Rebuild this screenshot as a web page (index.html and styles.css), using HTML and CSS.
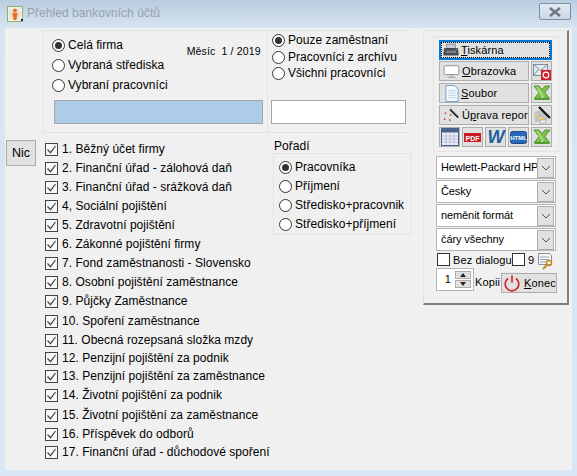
FILE: index.html
```
<!DOCTYPE html>
<html lang="cs">
<head>
<meta charset="utf-8">
<title>Přehled bankovních účtů</title>
<link rel="stylesheet" href="styles.css">
</head>
<body>
<svg class="defs" width="0" height="0">
  <symbol id="chk" viewBox="0 0 13 13"><rect x=".5" y=".5" width="12" height="12" fill="#f8f8f8" stroke="#444"/><path d="M2.5 6.500l3 3.200 5-6.700" fill="none" stroke="#444" stroke-width="1.200"/></symbol>
  <symbol id="xls" viewBox="0 0 18 16"><path d="M1 1h5l3 3.500L12 1h5l-5 6.500 5 6.500h-5l-3-3.500L6 14H1l5-6.500z" fill="#7cc04a" stroke="#3f8a22" stroke-width=".8"/><path d="M2 13h14v2H2z" fill="#4f9d2c"/><path d="M3 2h2.500l6 10H9z" fill="#a5dc78"/></symbol>
</svg>
<div class="window">
  <header class="titlebar">
    <svg class="appicon" width="16" height="16" viewBox="0 0 16 16"><rect x=".5" y=".5" width="15" height="15" fill="#f1eee4" stroke="#8db36a"/><circle cx="8" cy="8" r="6" fill="#e9dfd3"/><circle cx="8" cy="4.600" r="1.900" fill="#e2701e"/><path d="M5.200 7h5.600l-1 4-.5 3H6.700l-.5-3z" fill="#e2701e"/><rect x="14" y="13" width="2" height="2" fill="#222"/></svg>
    <span class="titletext">Přehled bankovních účtů</span>
    <button class="close"><svg width="14" height="10" viewBox="0 0 14 10"><path d="M2 1l10 8M12 1L2 9" stroke="#6d7580" stroke-width="2.400"/></svg></button>
  </header>
  <div class="client">
    <div class="main">
      <section class="top">
        <div class="top-left">
          <div class="top-left-row">
            <div class="radios r20">
              <label class="radio"><i class="dot on"></i>Celá firma</label>
              <label class="radio"><i class="dot"></i>Vybraná střediska</label>
              <label class="radio"><i class="dot"></i>Vybraní pracovníci</label>
            </div>
            <span class="month">Měsíc &nbsp;1 / 2019</span>
          </div>
          <div class="field blue"></div>
        </div>
        <div class="top-right">
          <div class="radios r165">
            <label class="radio"><i class="dot on"></i>Pouze zaměstnaní</label>
            <label class="radio"><i class="dot"></i>Pracovníci z archívu</label>
            <label class="radio"><i class="dot"></i>Všichni pracovníci</label>
          </div>
          <div class="field white"></div>
        </div>
      </section>
      <section class="middle">
        <button class="btn nic">Nic</button>
        <ul class="checks">
          <li><svg class="cb"><use href="#chk"/></svg>1. Běžný účet firmy</li>
          <li><svg class="cb"><use href="#chk"/></svg>2. Finanční úřad - zálohová daň</li>
          <li><svg class="cb"><use href="#chk"/></svg>3. Finanční úřad - srážková daň</li>
          <li><svg class="cb"><use href="#chk"/></svg>4, Sociální pojištění</li>
          <li><svg class="cb"><use href="#chk"/></svg>5. Zdravotní pojištění</li>
          <li><svg class="cb"><use href="#chk"/></svg>6. Zákonné pojištění firmy</li>
          <li><svg class="cb"><use href="#chk"/></svg>7. Fond zaměstnanosti - Slovensko</li>
          <li><svg class="cb"><use href="#chk"/></svg>8. Osobní pojištění zaměstnance</li>
          <li><svg class="cb"><use href="#chk"/></svg>9. Půjčky Zaměstnance</li>
          <li class="tall"><svg class="cb"><use href="#chk"/></svg>10. Spoření zaměstnance</li>
          <li><svg class="cb"><use href="#chk"/></svg>11. Obecná rozepsaná složka mzdy</li>
          <li class="short"><svg class="cb"><use href="#chk"/></svg>12. Penzijní pojištění za podnik</li>
          <li class="short"><svg class="cb"><use href="#chk"/></svg>13. Penzijní pojištění za zaměstnance</li>
          <li><svg class="cb"><use href="#chk"/></svg>14. Životní pojištění za podnik</li>
          <li class="tall"><svg class="cb"><use href="#chk"/></svg>15. Životní pojištění za zaměstnance</li>
          <li><svg class="cb"><use href="#chk"/></svg>16. Příspěvek do odborů</li>
          <li class="short"><svg class="cb"><use href="#chk"/></svg>17. Finanční úřad - důchodové spoření</li>
        </ul>
        <div class="order">
          <div class="order-title">Pořadí</div>
          <div class="order-box">
            <label class="radio"><i class="dot on"></i>Pracovníka</label>
            <label class="radio"><i class="dot"></i>Příjmení</label>
            <label class="radio"><i class="dot"></i>Středisko+pracovnik</label>
            <label class="radio"><i class="dot"></i>Středisko+příjmení</label>
          </div>
        </div>
      </section>
    </div>
    <aside class="side">
      <div class="outputs">
        <button class="btn wide focus"><span class="focus-in"><svg class="ic prn" width="16" height="14" viewBox="0 0 22 18"><path d="M5 1h12v6H5z" fill="#c9ccd0" stroke="#777"/><path d="M2 7h18l1 9H1z" fill="#4a4f55" stroke="#33373c"/><path d="M4 10h14v3H4z" fill="#7c838a"/><rect x="17" y="8" width="2" height="1" fill="#5cd65c"/></svg><span class="lbl"><u>T</u>iskárna</span></span></button>
        <div class="out-row">
          <button class="btn grow"><svg class="ic mon" width="17" height="15" viewBox="0 0 22 18"><rect x="1.500" y="1.500" width="19" height="11.500" rx="1.500" fill="#fff" stroke="#777"/><path d="M11 13v3M6 16.500h10" stroke="#888"/></svg><span class="lbl"><u>O</u>brazovka</span></button>
          <button class="btn sq"><svg width="18" height="17" viewBox="0 0 18 17"><rect x=".5" y="1.500" width="14" height="11" fill="#dfeaf3" stroke="#7d8c98"/><path d="M.5 1.500l7 6 7-6M.5 12.500l5-6M14.500 12.500l-5-6" fill="none" stroke="#7d8c98"/><rect x="8" y="7" width="10" height="10" fill="#d0202a"/><circle cx="13" cy="12" r="2.800" fill="none" stroke="#fff" stroke-width="1.200"/></svg></button>
        </div>
        <div class="out-row">
          <button class="btn grow"><svg class="ic doc" width="14" height="18" viewBox="0 0 14 18"><path d="M.5.500h9l4 4v13H.5z" fill="#f3f8fd" stroke="#6f9fc8"/><path d="M3 6h8M3 8.500h8M3 11h8M3 13.500h8" stroke="#b8cfe4"/></svg><span class="lbl"><u>S</u>oubor</span></button>
          <button class="btn sq"><svg width="18" height="16"><use href="#xls"/></svg></button>
        </div>
        <div class="out-row">
          <button class="btn grow"><svg class="ic wand" width="17" height="16" viewBox="0 0 20 18"><path d="M8 2l10 10" stroke="#222" stroke-width="2.200"/><path d="M6 1l2 2" stroke="#ddd" stroke-width="2"/><path d="M2 7h2M3 6v2M8 9h2M9 8v2M1 14h2M2 13v2M7 15h2M8 14v2" stroke="#c33"/></svg><span class="lbl">Ú<u>p</u>rava report</span></button>
          <button class="btn sq"><svg width="18" height="18" viewBox="0 0 18 18"><path d="M1 6l9-2 5 9-6 3H2z" fill="#bfc2c6"/><path d="M2 8h3v2H2zM6 11h4v3H6z" fill="#f3d24f"/><path d="M7 14h6v3H7z" fill="#f4f4f4" stroke="#999" stroke-width=".6"/><path d="M6 1l11 11" stroke="#111" stroke-width="2.200"/></svg></button>
        </div>
        <div class="out-row">
          <button class="btn sq"><svg width="18" height="18" viewBox="0 0 18 18"><rect x=".5" y=".5" width="17" height="17" fill="#eef0f8" stroke="#47608c"/><rect x="1" y="1" width="16" height="3.500" fill="#47608c"/><path d="M1 8h16M1 11h16M1 14h16M5 5v12M9 5v12M13 5v12" stroke="#b3bed4"/></svg></button>
          <button class="btn sq"><svg width="17" height="9" viewBox="0 0 17 9"><rect width="17" height="9" fill="#cc1a22"/><text x="8.500" y="7.500" class="pdf">PDF</text></svg></button>
          <button class="btn sq"><span class="word">W</span></button>
          <button class="btn sq"><svg width="17" height="13" viewBox="0 0 17 13"><rect x=".5" y=".5" width="16" height="12" rx="2" fill="#2a68b8" stroke="#1d4a8c"/><text x="8.500" y="9" class="html">HTML</text></svg></button>
          <button class="btn sq"><svg width="18" height="16"><use href="#xls"/></svg></button>
        </div>
      </div>
      <div class="selects">
        <div class="select"><span class="sel-text">Hewlett-Packard HP</span><span class="arrow"><svg width="10" height="6" viewBox="0 0 10 6"><path d="M1 1l4 4 4-4" fill="none" stroke="#555"/></svg></span></div>
        <div class="select"><span class="sel-text">Česky</span><span class="arrow"><svg width="10" height="6" viewBox="0 0 10 6"><path d="M1 1l4 4 4-4" fill="none" stroke="#555"/></svg></span></div>
        <div class="select"><span class="sel-text">neměnit formát</span><span class="arrow"><svg width="10" height="6" viewBox="0 0 10 6"><path d="M1 1l4 4 4-4" fill="none" stroke="#555"/></svg></span></div>
        <div class="select"><span class="sel-text">čáry všechny</span><span class="arrow"><svg width="10" height="6" viewBox="0 0 10 6"><path d="M1 1l4 4 4-4" fill="none" stroke="#555"/></svg></span></div>
      </div>
      <div class="dialog-row">
        <span class="box"></span><span class="dlg">Bez dialogu</span><span class="box"></span><span class="nine">9</span>
        <svg class="keydoc" width="16" height="17" viewBox="0 0 16 17"><path d="M.5.500h11l2 2v9H.5z" fill="#f6f6f6" stroke="#8b9099"/><path d="M2 4h9M2 6.500h9M2 9h6" stroke="#9aa8bb"/><circle cx="11" cy="10" r="2.500" fill="none" stroke="#c58a1b" stroke-width="1.500"/><path d="M9 12l-4 4" stroke="#c58a1b" stroke-width="2"/></svg>
      </div>
      <div class="copies-row">
        <div class="spin"><span class="spin-val">1</span><span class="spin-btns"><span class="up"></span><span class="down"></span></span></div>
        <span class="kopii">Kopii</span>
        <button class="btn konec"><svg class="pwr" width="18" height="18" viewBox="0 0 18 18"><path d="M5 4.500a6.800 6.800 0 1 0 8 0" fill="none" stroke="#d8232a" stroke-width="1.700"/><path d="M9 1.500v7" stroke="#d8232a" stroke-width="1.700"/></svg><span class="lbl"><u>K</u>onec</span></button>
      </div>
    </aside>
  </div>
</div>
</body>
</html>
```
FILE: styles.css
```
* { box-sizing: border-box; }
html, body { margin: 0; padding: 0; }
body { width: 577px; height: 476px; overflow: hidden; font: 12px/15px "Liberation Sans", Arial, sans-serif; color: #000; letter-spacing: .04px; }
.defs { position: absolute; }
button { font: inherit; letter-spacing: inherit; color: inherit; margin: 0; padding: 0; }

.window { height: 476px; display: flex; flex-direction: column; background: linear-gradient(#b9cde0 0, #d7e4f1 28px, #d9e6f3 100%); padding: 0 5px 6px; }
.titlebar { height: 28px; display: flex; align-items: center; flex: none; padding-left: 2px; padding-bottom: 1px; }
.titletext { margin-left: 4px; color: #96a1ac; }
.appicon { flex: none; }
.close { margin-left: auto; margin-right: 1px; margin-bottom: 4px; width: 32px; height: 17px; display: flex; align-items: center; justify-content: center; background: linear-gradient(#e3ebf3, #c9d6e3); border: 1px solid #7d8da0; border-radius: 2px; }

.client { flex: 1; background: #f0f0f0; display: flex; align-items: flex-start; padding-top: 2px; }
.main { width: 418px; flex: none; }

.top { margin-left: 38px; width: 368px; height: 103px; border: 1px solid #e3e3e3; border-right: 0; display: flex; }
.top-left { width: 224px; border-right: 1px solid #e3e3e3; padding: 7px 0 0 8px; }
.top-left-row { display: flex; height: 61px; }
.month { margin-left: 19px; margin-top: 6px; font-size: 10.500px; letter-spacing: .15px; white-space: nowrap; }
.top-right { flex: 1; padding: 2px 0 0 3px; }
.radios { display: flex; flex-direction: column; }
.r20 { gap: 5px; }
.r165 { gap: 1.500px; height: 67px; margin-left: 1px; }
.radio { display: flex; align-items: center; gap: 3px; white-space: nowrap; height: 15px; }
.dot { width: 13px; height: 13px; border: 1px solid #333; border-radius: 50%; background: #fff; flex: none; display: flex; align-items: center; justify-content: center; }
.dot.on::after { content: ""; width: 7px; height: 7px; border-radius: 50%; background: #333; }
.field { height: 24px; border: 1px solid #a6a6a6; }
.blue { background: #aecbe8; margin: 1px 0 0 2px; width: 209px; }
.white { background: #fff; width: 135px; }

.middle { display: flex; align-items: flex-start; padding-top: 7px; }
.btn { background: #e1e1e1; border: 1px solid #adadad; display: flex; align-items: center; }
.btn svg { flex: none; }
.nic { width: 30px; height: 26px; margin-left: 1px; justify-content: center; font-size: 12.500px; flex: none; }
.checks { list-style: none; margin: 0 0 0 9px; padding: 0; width: 228px; flex: none; }
.checks li { height: 19px; display: flex; align-items: center; gap: 4px; white-space: nowrap; }
.checks li.tall { margin-top: 1px; }
.checks li.short { margin-top: -1px; }
.cb { width: 13px; height: 13px; flex: none; }
.order { margin-top: -1px; }
.order-title { margin-left: 1px; height: 14px; }
.order-box { width: 139px; height: 82px; border: 1px solid #e3e3e3; padding: 6px 0 0 5px; display: flex; flex-direction: column; gap: 4px; }

.side { width: 146px; height: 275px; flex: none; border: 1px solid #e3e3e3; border-right: 2px solid #808080; border-bottom: 2px solid #808080; padding: 5px 0 0 9px; font-size: 11px; letter-spacing: .12px; }
.outputs { width: 126px; height: 116px; border: 1px solid #e3e3e3; padding: 3px 0 0 5px; display: flex; flex-direction: column; gap: 2px; }
.wide { width: 113px; height: 20px; margin-bottom: -1px; }
.focus { border: 2px solid #0078d7; }
.focus-in { flex: 1; height: 100%; display: flex; align-items: center; border: 1px dotted #000; }
.out-row { display: flex; justify-content: space-between; width: 113px; height: 20px; }
.grow { width: 90px; height: 20px; overflow: hidden; white-space: nowrap; }
.sq { width: 21px; height: 20px; justify-content: center; flex: none; }
.lbl { margin-left: 2px; }
.ic { margin-left: 3px; }
.prn { margin-left: 1px; }
.doc { margin-left: 5px; height: 17px; }
.pdf { font: bold 7px "Liberation Sans", sans-serif; fill: #fff; text-anchor: middle; letter-spacing: 0; }
.html { font: bold 6px "Liberation Sans", sans-serif; fill: #fff; text-anchor: middle; letter-spacing: 0; }
.word { font: italic bold 18px/18px "Liberation Sans", sans-serif; color: #1f5f9e; letter-spacing: -1px; }

.selects { margin: 4px 0 0 3px; width: 120px; display: flex; flex-direction: column; gap: 1px; letter-spacing: -.1px; }
.select { height: 23px; background: #fff; border: 1px solid #b5b5b5; display: flex; align-items: center; }
.sel-text { flex: 1; padding-left: 4px; white-space: nowrap; overflow: hidden; }
.arrow { width: 17px; height: 20px; flex: none; background: #e1e1e1; border: 1px solid #adadad; display: flex; align-items: center; justify-content: center; margin-right: 1px; }

.dialog-row { display: flex; align-items: flex-start; margin: 2px 0 0 4px; height: 17px; }
.box { width: 13px; height: 13px; background: #fff; border: 1px solid #333; flex: none; }
.dlg { margin-left: 3px; width: 59px; white-space: nowrap; }
.nine { margin-left: 3px; width: 10px; }
.keydoc { flex: none; }
.copies-row { display: flex; align-items: flex-start; margin: -2px 0 0 3px; }
.spin { width: 38px; height: 23px; background: #fff; border: 1px solid #b5b5b5; display: flex; }
.spin-val { flex: 1; text-align: right; padding: 3px 4px 0 0; }
.spin-btns { width: 16px; display: flex; flex-direction: column; margin: 2px 2px 2px 0; gap: 1px; }
.up, .down { flex: 1; background: #e1e1e1; border: 1px solid #adadad; display: flex; align-items: center; justify-content: center; }
.up::after { content: ""; border: 3px solid transparent; border-top: 0; border-bottom: 4px solid #222; }
.down::after { content: ""; border: 3px solid transparent; border-bottom: 0; border-top: 4px solid #222; }
.kopii { margin-left: 1px; margin-top: 7px; width: 26px; }
.konec { width: 56px; height: 20px; margin-top: 5px; padding-left: 1px; overflow: hidden; white-space: nowrap; }
.konec .lbl { margin-left: 3px; }
```
